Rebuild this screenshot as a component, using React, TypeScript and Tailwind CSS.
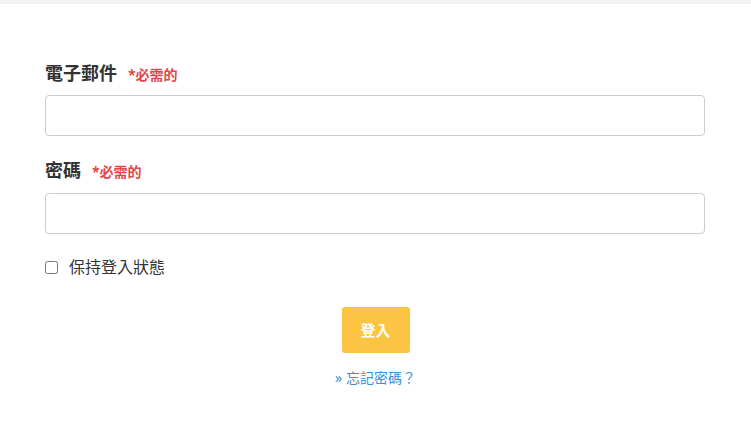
import React, { useState } from 'react';

const font = "font-['Noto_Sans','Noto_Sans_CJK_TC',sans-serif]";

export default function App() {
  const [email, setEmail] = useState('');
  const [password, setPassword] = useState('');
  const [remember, setRemember] = useState(false);

  return (
    <div className={`min-h-[434px] w-[751px] bg-white ${font}`}>
      {/* 上方灰條 */}
      <div className="h-[4px] bg-[#f2f2f2]" />

      <form className="px-[45px] pt-[56px]" onSubmit={(e) => e.preventDefault()}>
        {/* 電子郵件 */}
        <div className="flex h-[26px] items-baseline gap-[11px]">
          <label className="text-[18px] font-bold leading-[26px] text-[#333]">電子郵件</label>
          <span className="text-[14px] font-bold text-[#e0474c]">*必需的</span>
        </div>
        <input
          type="email"
          value={email}
          onChange={(e) => setEmail(e.target.value)}
          className="mt-[9px] block h-[41px] w-[660px] rounded-[4px] border border-[#ccc] px-3 text-sm outline-none"
        />

        {/* 密碼 */}
        <div className="mt-[21px] flex h-[26px] items-baseline gap-[11px]">
          <label className="text-[18px] font-bold leading-[26px] text-[#333]">密碼</label>
          <span className="text-[14px] font-bold text-[#e0474c]">*必需的</span>
        </div>
        <input
          type="password"
          value={password}
          onChange={(e) => setPassword(e.target.value)}
          className="mt-[10px] block h-[41px] w-[660px] rounded-[4px] border border-[#ccc] px-3 text-sm outline-none"
        />

        {/* 保持登入 */}
        <label className="mt-[22px] flex items-center gap-[11px] text-[16px] leading-[22px] text-[#333]">
          <input
            type="checkbox"
            checked={remember}
            onChange={(e) => setRemember(e.target.checked)}
            className="m-0 h-[13px] w-[13px]"
          />
          保持登入狀態
        </label>

        <div className="mt-[29px] flex flex-col items-center">
          <button
            type="submit"
            className="h-[46px] w-[68px] rounded-[3px] bg-[#fbc443] text-[15px] font-bold text-white"
          >
            登入
          </button>
          <a href="#" className="mt-[15px] text-[14px] leading-[20px] text-[#3a8fd6]">
            » 忘記密碼？
          </a>
        </div>
      </form>
    </div>
  );
}
